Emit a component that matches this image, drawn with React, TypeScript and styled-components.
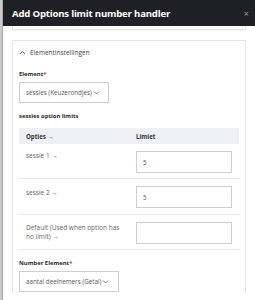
import React from "react";
import styled, { createGlobalStyle } from "styled-components";

const Global = createGlobalStyle`
  html, body { margin: 0; padding: 0; background: #fff; }
  body { font-family: "Open Sans", "Noto Sans", sans-serif; overflow: hidden; }
  * { box-sizing: border-box; }
`;

const Page = styled.div`
  display: flex;
  width: 255px;
  height: 300px;
  overflow: hidden;
`;

const Strip = styled.div`
  width: 3px;
  flex: none;
  background: #c9c9c6;
  border-right: 1px solid #a9a9a6;
`;

const Panel = styled.div`
  flex: 1;
  display: flex;
  flex-direction: column;
  background: #fff;
`;

const Header = styled.div`
  height: 26px;
  flex: none;
  background: #1f2025;
  display: flex;
  align-items: center;
  justify-content: space-between;
  padding: 0 6px 0 9px;
`;

const Title = styled.div`
  color: #fff;
  font-weight: 700;
  font-size: 9.6px;
  letter-spacing: -0.2px;
`;

const Close = styled.div`
  color: #9a9a9f;
  font-size: 9px;
  line-height: 1;
`;

const Body = styled.div`
  padding: 0 9px;
  display: flex;
  flex-direction: column;
  gap: 10px;
`;

const TopCard = styled.div`
  height: 4px;
  border: 1px solid #e6e6e6;
  border-top: none;
  box-shadow: 0 1px 2px rgba(0, 0, 0, 0.05);
`;

const Card = styled.div`
  border: 1px solid #e6e6e6;
  border-bottom: none;
  padding: 0 6px;
`;

const SectionHead = styled.div`
  height: 22px;
  display: flex;
  align-items: center;
  gap: 4px;
  color: #444;
  font-size: 6.5px;
`;

const Label = styled.div<{ $mt?: number }>`
  font-size: 5.9px;
  font-weight: 700;
  color: #2a2a2a;
  margin-top: ${(p) => p.$mt ?? 0}px;
  line-height: 9px;
`;

const Req = styled.span`
  color: #d0343a;
`;

const Select = styled.div<{ $w: number }>`
  width: ${(p) => p.$w}px;
  height: 21px;
  margin-top: 3px;
  border: 1px solid #cfcfcf;
  display: flex;
  align-items: center;
  padding-left: 6px;
  gap: 1px;
  font-size: 6.3px;
  color: #5a5a5a;
  white-space: nowrap;
`;

const Table = styled.div`
  margin-top: 7px;
  display: flex;
  flex-direction: column;
`;

const HeadRow = styled.div`
  display: grid;
  grid-template-columns: 117px 1fr;
  height: 16px;
  align-items: center;
  background: #eef0f6;
  font-size: 6.1px;
  font-weight: 700;
  color: #333;
`;

const Cell = styled.div<{ $pl: number }>`
  padding-left: ${(p) => p.$pl}px;
`;

const Row = styled.div<{ $h: number }>`
  display: grid;
  grid-template-columns: 117px 1fr;
  height: ${(p) => p.$h}px;
  border-bottom: 1px solid #e8e8e8;
`;

const OptCell = styled.div<{ $pt: number }>`
  padding: ${(p) => p.$pt}px 10px 0 7px;
  font-size: 6.5px;
  line-height: 9px;
  color: #666;
`;

const InputCell = styled.div`
  padding: 7px 7px 0 0;
`;

const Input = styled.div`
  height: 22px;
  border: 1px solid #cfcfcf;
  display: flex;
  align-items: center;
  padding-left: 6px;
  font-size: 6.2px;
  color: #555;
`;

const ChevUp = () => (
  <svg width="7" height="5" viewBox="0 0 7 5">
    <path d="M1 4 L3.5 1.5 L6 4" stroke="#555" strokeWidth="0.9" fill="none" />
  </svg>
);

const ChevDown = () => (
  <svg width="7" height="5" viewBox="0 0 7 5">
    <path d="M1 1.5 L3.5 4 L6 1.5" stroke="#666" strokeWidth="0.8" fill="none" />
  </svg>
);

export default function App() {
  return (
    <>
      <Global />
      <Page>
        <Strip />
        <Panel>
          <Header>
            <Title>Add Options limit number handler</Title>
            <Close>×</Close>
          </Header>
          <Body>
            <TopCard />
            <Card>
              <SectionHead>
                <ChevUp />
                <span>Elementinstellingen</span>
              </SectionHead>
              <Label $mt={7}>
                Element<Req>*</Req>
              </Label>
              <Select $w={90}>
                sessies (Keuzerondjes) <ChevDown />
              </Select>
              <Label $mt={9}>sessies option limits</Label>
              <Table>
                <HeadRow>
                  <Cell $pl={7}>Opties →</Cell>
                  <Cell $pl={0}>Limiet</Cell>
                </HeadRow>
                <Row $h={35}>
                  <OptCell $pt={7}>sessie 1 →</OptCell>
                  <InputCell>
                    <Input>5</Input>
                  </InputCell>
                </Row>
                <Row $h={36}>
                  <OptCell $pt={9}>sessie 2 →</OptCell>
                  <InputCell>
                    <Input>5</Input>
                  </InputCell>
                </Row>
                <Row $h={35}>
                  <OptCell $pt={8}>Default (Used when option has no limit) →</OptCell>
                  <InputCell>
                    <Input />
                  </InputCell>
                </Row>
              </Table>
              <Label $mt={9}>
                Number Element<Req>*</Req>
              </Label>
              <Select $w={100}>
                aantal deelnemers (Getal) <ChevDown />
              </Select>
            </Card>
          </Body>
        </Panel>
      </Page>
    </>
  );
}
